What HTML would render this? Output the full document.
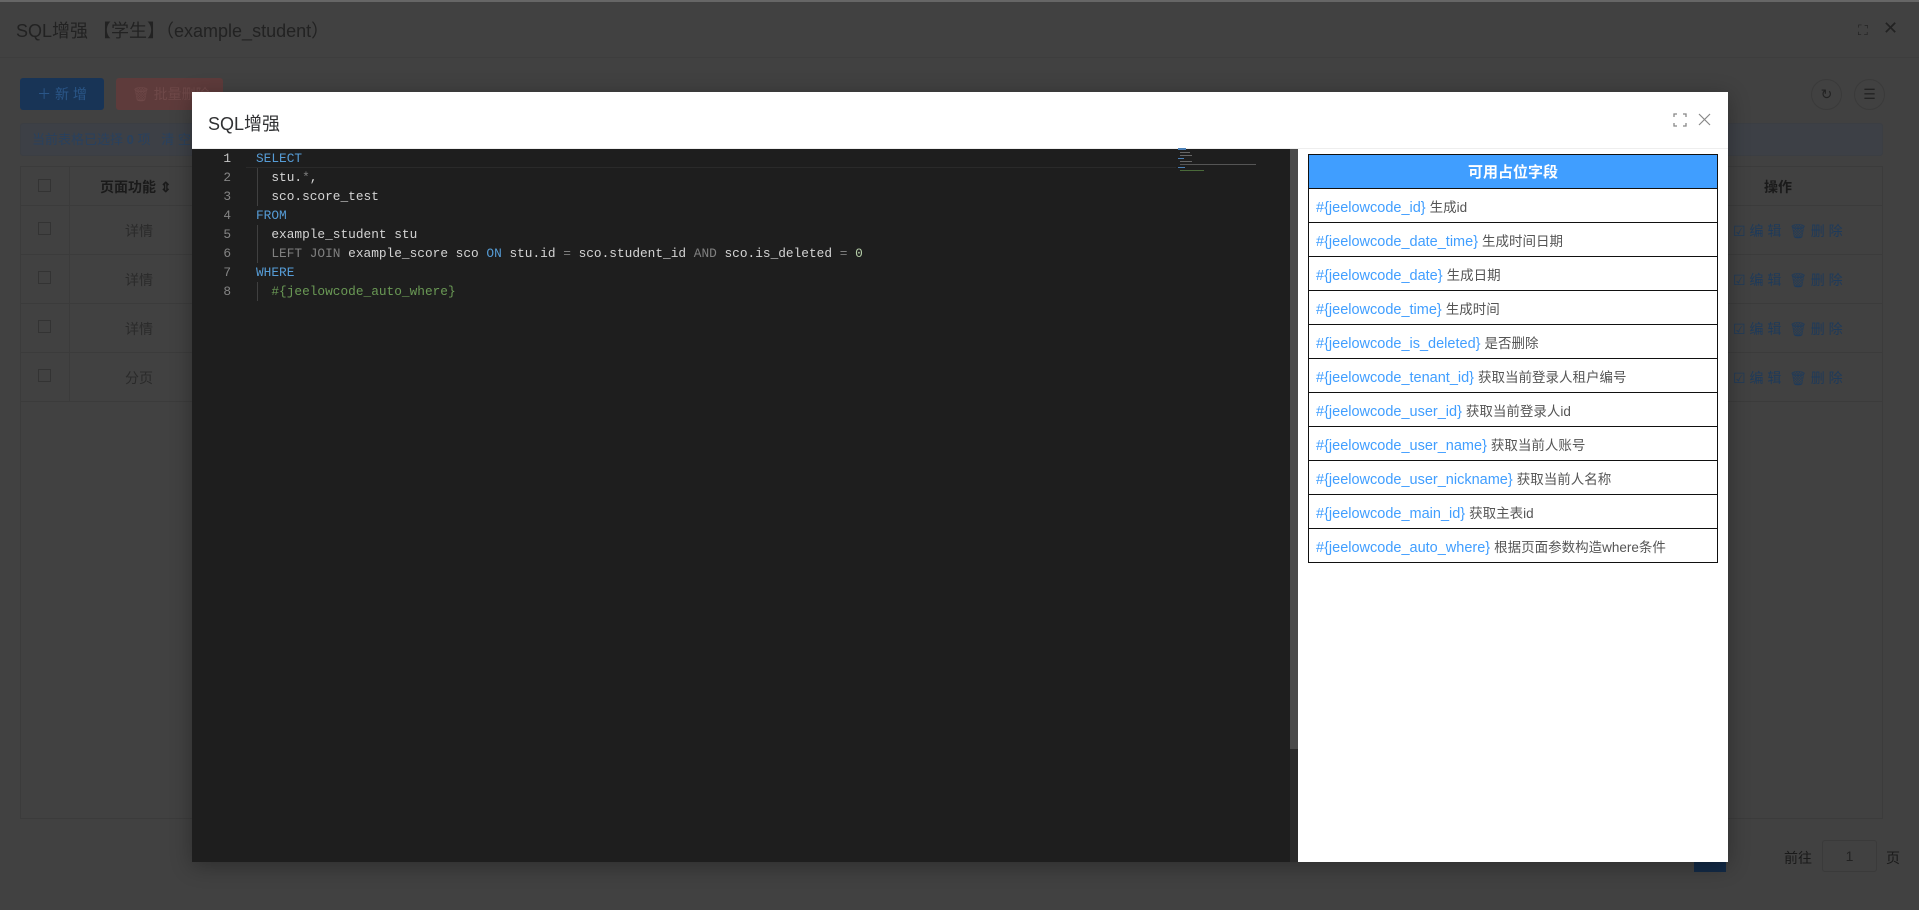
<!DOCTYPE html>
<html><head><meta charset="utf-8"><style>
*{margin:0;padding:0;box-sizing:border-box}
body{width:1919px;height:910px;background:#414141;position:relative;overflow:hidden;font-family:"Liberation Sans","Noto Sans CJK SC",sans-serif}
.a{position:absolute}
.code{font-family:"Liberation Mono","Noto Sans CJK SC",monospace;font-size:12.8px;line-height:19px;white-space:pre;color:#d4d4d4}
.kw{color:#569cd6}.op{color:#808080}.gr{color:#6a9955}.nm{color:#b5cea8}
table{border-collapse:collapse}
td{border:1px solid #111;height:34px;padding:0 7px;font-size:14.5px;white-space:nowrap}
td .k{color:#409eff}td .d{color:#555;font-size:13.5px;margin-left:4px}
.bgt{color:#1a1a1a}
</style></head><body>
<div class="a" style="left:0;top:0;width:1919px;height:2px;background:#666"></div>
<div class="a bgt" style="left:16px;top:17px;font-size:18px;color:#222">SQL增强 【学生】（example_student）</div>
<div class="a" style="left:0;top:57px;width:1919px;height:1px;background:#3d3d3d"></div>
<div class="a" style="left:1858px;top:22px;color:#222;font-size:14px">⛶</div>
<div class="a" style="left:1883px;top:18px;color:#222;font-size:18px">✕</div>
<div class="a" style="left:20px;top:78px;width:84px;height:32px;background:#183456;border-radius:3px;color:#2a5688;font-size:14px;line-height:32px;text-align:center">＋ 新 增</div>
<div class="a" style="left:116px;top:78px;width:107px;height:32px;background:#5e3b3b;border-radius:3px;color:#6e4848;font-size:14px;line-height:32px;padding-left:16px">🗑 批量删除</div>
<div class="a" style="left:1811px;top:79px;width:31px;height:31px;border:1px solid #3a3a3a;border-radius:50%;color:#222;text-align:center;line-height:29px;font-size:14px">↻</div>
<div class="a" style="left:1854px;top:79px;width:31px;height:31px;border:1px solid #3a3a3a;border-radius:50%;color:#222;text-align:center;line-height:29px;font-size:14px">☰</div>
<div class="a" style="left:20px;top:123px;width:1863px;height:33px;background:#3d4046;border:1px solid #3b3e43;border-radius:3px;color:#29415e;font-size:13px;line-height:31px;padding-left:11px">当前表格已选择 <b>0</b> 项 &nbsp; 清 空</div>
<div class="a" style="left:20px;top:166px;width:1863px;height:653px;border:1px solid #3b3b3b"></div>
<div class="a" style="left:20px;top:205px;width:1863px;height:1px;background:#3b3b3b"></div>
<div class="a" style="left:20px;top:254px;width:1863px;height:1px;background:#3b3b3b"></div>
<div class="a" style="left:20px;top:303px;width:1863px;height:1px;background:#3b3b3b"></div>
<div class="a" style="left:20px;top:352px;width:1863px;height:1px;background:#3b3b3b"></div>
<div class="a" style="left:20px;top:401px;width:1863px;height:1px;background:#3b3b3b"></div>
<div class="a" style="left:69px;top:166px;width:1px;height:235px;background:#3b3b3b"></div>
<div class="a bgt" style="left:100px;top:177px;font-size:14px;font-weight:bold">页面功能 ⇕</div>
<div class="a" style="left:38px;top:179px;width:13px;height:13px;border:1px solid #333"></div>
<div class="a" style="left:38px;top:222px;width:13px;height:13px;border:1px solid #333"></div>
<div class="a" style="left:38px;top:271px;width:13px;height:13px;border:1px solid #333"></div>
<div class="a" style="left:38px;top:320px;width:13px;height:13px;border:1px solid #333"></div>
<div class="a" style="left:38px;top:369px;width:13px;height:13px;border:1px solid #333"></div>
<div class="a" style="left:125px;top:221px;font-size:14px;color:#2a2a2a">详情</div>
<div class="a" style="left:125px;top:270px;font-size:14px;color:#2a2a2a">详情</div>
<div class="a" style="left:125px;top:319px;font-size:14px;color:#2a2a2a">详情</div>
<div class="a" style="left:125px;top:368px;font-size:14px;color:#2a2a2a">分页</div>
<div class="a bgt" style="left:1764px;top:177px;font-size:14px;font-weight:bold">操作</div>
<div class="a" style="left:1733px;top:221px;font-size:14px;color:#1e3a5a">☑ 编 辑 &nbsp;🗑 删 除</div>
<div class="a" style="left:1733px;top:270px;font-size:14px;color:#1e3a5a">☑ 编 辑 &nbsp;🗑 删 除</div>
<div class="a" style="left:1733px;top:319px;font-size:14px;color:#1e3a5a">☑ 编 辑 &nbsp;🗑 删 除</div>
<div class="a" style="left:1733px;top:368px;font-size:14px;color:#1e3a5a">☑ 编 辑 &nbsp;🗑 删 除</div>
<div class="a" style="left:1694px;top:842px;width:32px;height:30px;background:#132a46"></div>
<div class="a bgt" style="left:1784px;top:848px;font-size:14px">前往</div>
<div class="a" style="left:1822px;top:840px;width:55px;height:32px;border:1px solid #3a3a3a;border-radius:3px;text-align:center;line-height:30px;font-size:14px;color:#222">1</div>
<div class="a bgt" style="left:1886px;top:848px;font-size:14px">页</div>
<div class="a" style="left:192px;top:92px;width:1536px;height:770px;background:#fff;box-shadow:0 4px 20px rgba(0,0,0,.3)"></div>
<div class="a" style="left:208px;top:110px;font-size:18px;color:#303133">SQL增强</div>
<svg class="a" style="left:1673px;top:113px" width="14" height="14" viewBox="0 0 14 14" fill="none" stroke="#888" stroke-width="1.3"><path d="M1 4V1h3M10 1h3v3M13 10v3h-3M4 13H1v-3"/></svg>
<svg class="a" style="left:1698px;top:113px" width="13" height="13" viewBox="0 0 13 13" stroke="#888" stroke-width="1.2"><path d="M1 1l11 11M12 1L1 12"/></svg>
<div class="a" style="left:192px;top:148px;width:1536px;height:1px;background:#eee"></div>
<div class="a" style="left:192px;top:149px;width:1098px;height:713px;background:#1e1e1e"></div>
<div class="a" style="left:246px;top:167px;width:930px;height:1px;background:#2a2a2a"></div>
<div class="a" style="left:1290px;top:149px;width:8px;height:600px;background:#4a4a4a"></div>
<div class="a" style="left:1290px;top:749px;width:8px;height:113px;background:#2a2a2a"></div>
<div class="a code" style="left:200px;top:149px;width:31px;text-align:right;color:#858585"><span style="color:#c6c6c6">1</span>
2
3
4
5
6
7
8</div>
<div class="a" style="left:257px;top:168px;width:1px;height:38px;background:#404040"></div>
<div class="a" style="left:257px;top:225px;width:1px;height:38px;background:#404040"></div>
<div class="a" style="left:257px;top:282px;width:1px;height:19px;background:#404040"></div>
<div class="a code" style="left:256px;top:149px"><span class="kw">SELECT</span>
  stu.<span class="op">*</span>,
  sco.score_test
<span class="kw">FROM</span>
  example_student stu
  <span class="op">LEFT JOIN</span> example_score sco <span class="kw">ON</span> stu.id <span class="op">=</span> sco.student_id <span class="op">AND</span> sco.is_deleted <span class="op">=</span> <span class="nm">0</span>
<span class="kw">WHERE</span>
  <span class="gr">#{jeelowcode_auto_where}</span></div>
<div class="a" style="left:1178px;top:148px;width:8px;height:2px;background:#4a7fb5"></div>
<div class="a" style="left:1180px;top:152px;width:10px;height:1px;background:#666"></div>
<div class="a" style="left:1180px;top:155px;width:12px;height:1px;background:#666"></div>
<div class="a" style="left:1178px;top:158px;width:6px;height:1px;background:#4a7fb5"></div>
<div class="a" style="left:1180px;top:161px;width:12px;height:1px;background:#666"></div>
<div class="a" style="left:1180px;top:164px;width:76px;height:1px;background:#555"></div>
<div class="a" style="left:1178px;top:167px;width:7px;height:1px;background:#4a7fb5"></div>
<div class="a" style="left:1180px;top:170px;width:24px;height:1px;background:#4a6a3a"></div>
<table class="a" style="left:1308px;top:154px;width:410px">
<tr><td style="background:#409eff;color:#fff;font-weight:bold;font-size:15px;text-align:center;height:34px">可用占位字段</td></tr>
<tr><td><span class="k">#{jeelowcode_id}</span><span class="d">生成id</span></td></tr>
<tr><td><span class="k">#{jeelowcode_date_time}</span><span class="d">生成时间日期</span></td></tr>
<tr><td><span class="k">#{jeelowcode_date}</span><span class="d">生成日期</span></td></tr>
<tr><td><span class="k">#{jeelowcode_time}</span><span class="d">生成时间</span></td></tr>
<tr><td><span class="k">#{jeelowcode_is_deleted}</span><span class="d">是否删除</span></td></tr>
<tr><td><span class="k">#{jeelowcode_tenant_id}</span><span class="d">获取当前登录人租户编号</span></td></tr>
<tr><td><span class="k">#{jeelowcode_user_id}</span><span class="d">获取当前登录人id</span></td></tr>
<tr><td><span class="k">#{jeelowcode_user_name}</span><span class="d">获取当前人账号</span></td></tr>
<tr><td><span class="k">#{jeelowcode_user_nickname}</span><span class="d">获取当前人名称</span></td></tr>
<tr><td><span class="k">#{jeelowcode_main_id}</span><span class="d">获取主表id</span></td></tr>
<tr><td><span class="k">#{jeelowcode_auto_where}</span><span class="d">根据页面参数构造where条件</span></td></tr>
</table>
</body></html>
